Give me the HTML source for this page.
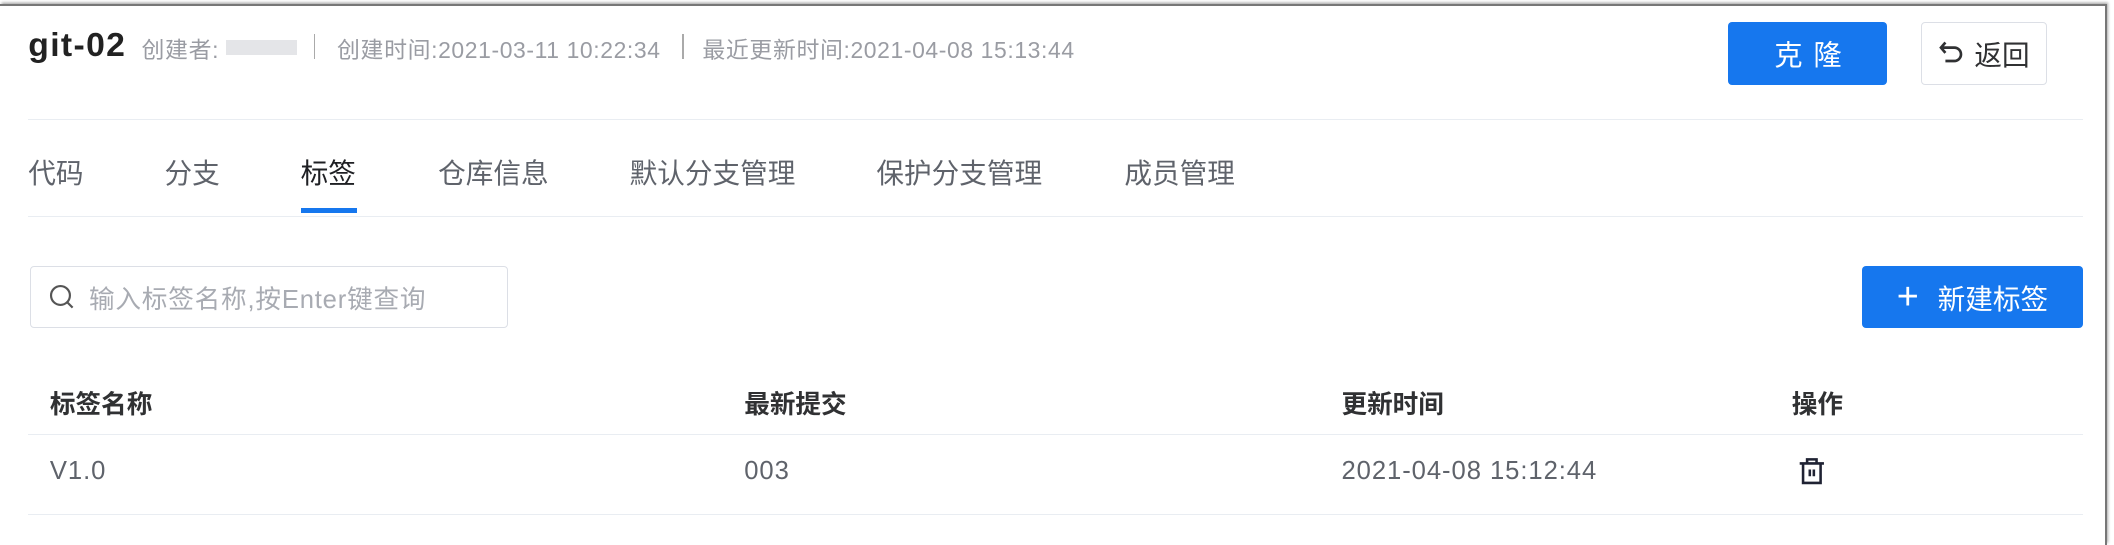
<!DOCTYPE html>
<html><head><meta charset="utf-8"><style>
html,body{margin:0;padding:0;background:#fff;width:2114px;height:520px;overflow:hidden}
#w{position:absolute;left:0;top:0;width:1568px;height:386px;zoom:1.3482;font-family:"Liberation Sans","Noto Sans CJK SC",sans-serif}
.a{position:absolute;white-space:nowrap}
.frame{position:absolute;left:0;top:3px;width:1561px;height:400px;border-top:2px solid #777;border-right:2px solid #777;box-shadow:1px -1px 2px #aaa}
.line{position:absolute;height:1px;background:#e9edf2}
.btn{position:absolute;border-radius:3px;display:flex;align-items:center;justify-content:center;box-sizing:border-box}
.tab{position:absolute;top:112px;font-size:20.5px;color:#5f636b}
.th{position:absolute;top:285px;font-size:19px;font-weight:bold;color:#303133}
.td{position:absolute;top:339px;font-size:19px;letter-spacing:0.7px;color:#5f636b}
.m{position:absolute;top:23px;font-size:17px;letter-spacing:0.45px;color:#9a9ca3}
</style></head><body><div id="w">
<div class="frame"></div>
<div class="a" style="left:21px;top:19px;font-size:25px;font-weight:bold;color:#222;letter-spacing:1px">git-02</div>
<div class="m" style="left:105px">创建者:</div>
<div class="a" style="left:168px;top:30px;width:52px;height:11px;background:#e4e5e8"></div>
<div class="a" style="left:233px;top:25px;width:1px;height:19px;background:#aaa"></div>
<div class="m" style="left:250px">创建时间:2021-03-11 10:22:34</div>
<div class="a" style="left:506px;top:25px;width:1px;height:19px;background:#aaa"></div>
<div class="m" style="left:521px">最近更新时间:2021-04-08 15:13:44</div>
<div class="btn" style="left:1282px;top:16px;width:118px;height:47px;background:#1677ee;color:#fff;font-size:21px;letter-spacing:8px;padding-left:8px">克隆</div>
<div class="btn" style="left:1425px;top:16px;width:93px;height:47px;border:1px solid #dcdfe6;color:#303133;font-size:20.5px">
<svg width="22" height="22" viewBox="0 0 20 20" style="margin-right:5px"><path d="M5 3 L2 6.5 L5 10 M2.5 6.5 H11 a4.5 4.5 0 0 1 0 9 H5" fill="none" stroke="#303133" stroke-width="1.8"/></svg>返回</div>
<div class="line" style="left:21px;top:88px;width:1524px"></div>
<div class="tab" style="left:21px">代码</div>
<div class="tab" style="left:122px">分支</div>
<div class="tab" style="left:223px;color:#1f2024">标签</div>
<div class="tab" style="left:325px">仓库信息</div>
<div class="tab" style="left:467px">默认分支管理</div>
<div class="tab" style="left:650px">保护分支管理</div>
<div class="tab" style="left:834px">成员管理</div>
<div class="a" style="left:223px;top:154px;width:42px;height:4px;background:#1677ee"></div>
<div class="line" style="left:21px;top:160px;width:1524px"></div>
<div class="a" style="left:22px;top:197px;width:355px;height:46px;border:1px solid #dcdfe6;border-radius:3px;box-sizing:border-box"></div>
<svg class="a" style="left:35px;top:209px" width="22" height="22" viewBox="0 0 22 22"><circle cx="10" cy="10" r="7" fill="none" stroke="#555" stroke-width="1.6"/><path d="M15 15 L19 19" stroke="#555" stroke-width="1.6"/></svg>
<div class="a" style="left:66px;top:207px;font-size:19px;letter-spacing:0.6px;color:#a8abb2">输入标签名称,按Enter键查询</div>
<div class="btn" style="left:1381px;top:197px;width:164px;height:46px;background:#1677ee;color:#fff;font-size:20.5px"><span style="font-size:28px;margin-right:14px;font-weight:300;line-height:1">+</span>新建标签</div>
<div class="th" style="left:37px">标签名称</div>
<div class="th" style="left:552px">最新提交</div>
<div class="th" style="left:995px">更新时间</div>
<div class="th" style="left:1329px">操作</div>
<div class="line" style="left:21px;top:322px;width:1524px"></div>
<div class="td" style="left:37px">V1.0</div>
<div class="td" style="left:552px">003</div>
<div class="td" style="left:995px">2021-04-08 15:12:44</div>
<svg class="a" style="left:1333px;top:338px" width="22" height="22" viewBox="0 0 22 22"><path d="M2 5.5 H20 M7.5 5.5 V2.5 H14.5 V5.5 M4.5 5.5 V20 H17.5 V5.5 M9.5 10 V15 M12.5 10 V15" fill="none" stroke="#1f2233" stroke-width="1.9"/></svg>
<div class="line" style="left:21px;top:381px;width:1524px"></div>
</div></body></html>
